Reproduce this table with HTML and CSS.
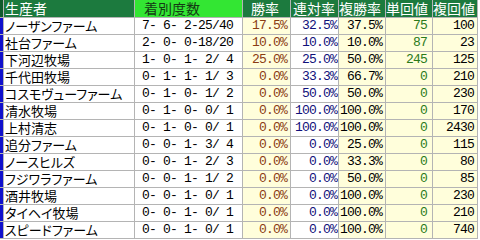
FILE: index.html
```html
<!DOCTYPE html>
<html lang="ja">
<head>
<meta charset="utf-8">
<link rel="stylesheet" href="styles.css">
</head>
<body>
<div class="sheet">
  <div class="bar bar-h"></div>
  <div class="h h-name">生産者</div>
  <div class="h h-rec">着別度数</div>
  <div class="h h-win">勝率</div>
  <div class="h h-ren">連対率</div>
  <div class="h h-fuku">複勝率</div>
  <div class="h h-tan">単回値</div>
  <div class="h h-fk">複回値</div>

  <div class="bar"></div><div class="name">ノーザンファーム</div><div class="rec">7- 6- 2-25/40</div><div class="num win">17.5%</div><div class="num ren">32.5%</div><div class="num fuku">37.5%</div><div class="num tan">75</div><div class="num fk">100</div>
  <div class="bar"></div><div class="name">社台ファーム</div><div class="rec">2- 0- 0-18/20</div><div class="num win">10.0%</div><div class="num ren">10.0%</div><div class="num fuku">10.0%</div><div class="num tan">87</div><div class="num fk">23</div>
  <div class="bar"></div><div class="name">下河辺牧場</div><div class="rec">1- 0- 1- 2/ 4</div><div class="num win">25.0%</div><div class="num ren">25.0%</div><div class="num fuku">50.0%</div><div class="num tan">245</div><div class="num fk">125</div>
  <div class="bar"></div><div class="name">千代田牧場</div><div class="rec">0- 1- 1- 1/ 3</div><div class="num win">0.0%</div><div class="num ren">33.3%</div><div class="num fuku">66.7%</div><div class="num tan">0</div><div class="num fk">210</div>
  <div class="bar"></div><div class="name">コスモヴューファーム</div><div class="rec">0- 1- 0- 1/ 2</div><div class="num win">0.0%</div><div class="num ren">50.0%</div><div class="num fuku">50.0%</div><div class="num tan">0</div><div class="num fk">230</div>
  <div class="bar"></div><div class="name">清水牧場</div><div class="rec">0- 1- 0- 0/ 1</div><div class="num win">0.0%</div><div class="num ren">100.0%</div><div class="num fuku">100.0%</div><div class="num tan">0</div><div class="num fk">170</div>
  <div class="bar"></div><div class="name">上村清志</div><div class="rec">0- 1- 0- 0/ 1</div><div class="num win">0.0%</div><div class="num ren">100.0%</div><div class="num fuku">100.0%</div><div class="num tan">0</div><div class="num fk">2430</div>
  <div class="bar"></div><div class="name">追分ファーム</div><div class="rec">0- 0- 1- 3/ 4</div><div class="num win">0.0%</div><div class="num ren">0.0%</div><div class="num fuku">25.0%</div><div class="num tan">0</div><div class="num fk">115</div>
  <div class="bar"></div><div class="name">ノースヒルズ</div><div class="rec">0- 0- 1- 2/ 3</div><div class="num win">0.0%</div><div class="num ren">0.0%</div><div class="num fuku">33.3%</div><div class="num tan">0</div><div class="num fk">80</div>
  <div class="bar"></div><div class="name">フジワラファーム</div><div class="rec">0- 0- 1- 1/ 2</div><div class="num win">0.0%</div><div class="num ren">0.0%</div><div class="num fuku">50.0%</div><div class="num tan">0</div><div class="num fk">85</div>
  <div class="bar"></div><div class="name">酒井牧場</div><div class="rec">0- 0- 1- 0/ 1</div><div class="num win">0.0%</div><div class="num ren">0.0%</div><div class="num fuku">100.0%</div><div class="num tan">0</div><div class="num fk">230</div>
  <div class="bar"></div><div class="name">タイヘイ牧場</div><div class="rec">0- 0- 1- 0/ 1</div><div class="num win">0.0%</div><div class="num ren">0.0%</div><div class="num fuku">100.0%</div><div class="num tan">0</div><div class="num fk">210</div>
  <div class="bar"></div><div class="name">スピードファーム</div><div class="rec">0- 0- 1- 0/ 1</div><div class="num win">0.0%</div><div class="num ren">0.0%</div><div class="num fuku">100.0%</div><div class="num tan">0</div><div class="num fk">740</div>
</div>
</body>
</html>
```
FILE: styles.css
```css
html, body {
  margin: 0;
  padding: 0;
  background: #ffffff;
}

.sheet {
  display: grid;
  grid-template-columns: 3px 130px 107px 47px 47px 46px 46px 44px;
  grid-template-rows: 17px repeat(13, 16px);
  gap: 1px;
  width: max-content;
  background: #b4b4b4;
  border-right: 1px solid #b4b4b4;
  border-bottom: 1px solid #b4b4b4;
  font-family: "Noto Sans CJK JP", sans-serif;
}

.sheet > div {
  overflow: hidden;
  white-space: pre;
}

.bar {
  background: #1010cc;
}

.bar-h {
  background: #0f5a2c;
}

.h {
  background: #1c7a3e;
  color: #ffffff;
  font-size: 14px;
  line-height: 17px;
}

.h-name { padding-left: 1px; }
.h-rec {
  background: #33e633;
  color: #153a15;
  padding-left: 9px;
}
.h-win { padding-left: 8px; }
.h-ren { padding-left: 2px; }
.h-fuku { padding-left: 0; }
.h-tan { padding-left: 0; }
.h-fk { padding-left: 0; }

.name {
  background: #ffffff;
  color: #000000;
  font-size: 13px;
  line-height: 16px;
  padding-left: 1px;
  font-feature-settings: "palt";
}

.rec,
.num {
  font-family: "Liberation Mono", monospace;
  font-size: 13px;
  letter-spacing: -0.8px;
  line-height: 16px;
}

.rec {
  background: #ffffff;
  color: #000000;
  padding-left: 7px;
}

.num {
  text-align: right;
}

.win {
  background: #fffedb;
  color: #8a3c14;
  padding-right: 3px;
}

.ren {
  background: #ffffff;
  color: #10107a;
  padding-right: 1px;
}

.fuku {
  background: #fffedb;
  color: #000000;
  padding-right: 3px;
}

.tan {
  background: #fffedb;
  color: #2a7a1a;
  padding-right: 5px;
}

.fk {
  background: #fffedb;
  color: #000000;
  padding-right: 3px;
}
```
